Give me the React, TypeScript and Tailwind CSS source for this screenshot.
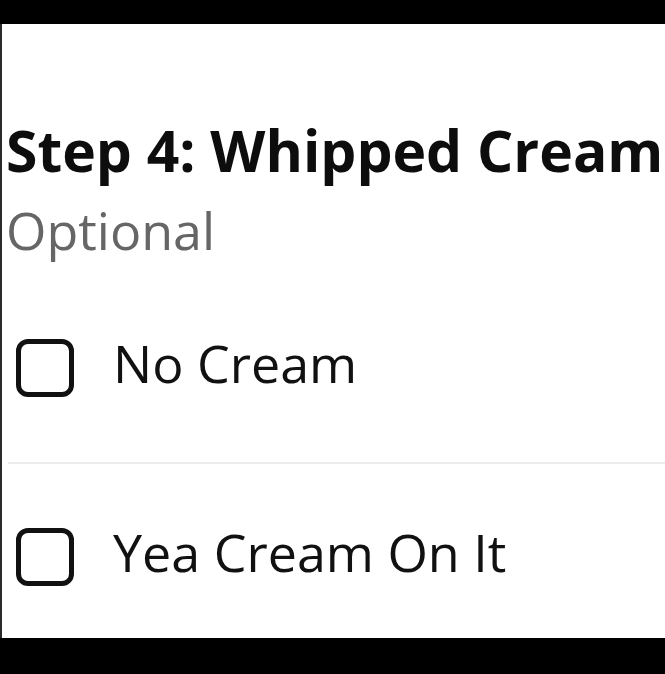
import { useState } from "react";

const options = ["No Cream", "Yea Cream On It"];

function Checkbox({ checked }: { checked: boolean }) {
    return (
        <span
            className={`block w-[58px] h-[58px] shrink-0 rounded-[12px] border-[5px] border-[#111] ${checked ? "bg-[#111]" : "bg-white"}`}
        />
    );
}

export default function App() {
    const [selected, setSelected] = useState<string[]>([]);

    const toggle = (name: string) => {
        setSelected((prev) => (prev.includes(name) ? prev.filter((n) => n !== name) : [...prev, name]));
    };

    return (
        <div className="w-[665px] h-[674px] bg-black flex flex-col overflow-hidden [font-variant-ligatures:none]" style={{ fontFamily: "'Open Sans', Lato, sans-serif" }}>
            <div className="h-[24px] shrink-0" />
            <div className="h-[614px] shrink-0 bg-white border-l-2 border-[#2a2a2a] pl-[4px] flex flex-col">
                <h1 className="mt-[98px] text-[57px] leading-[57px] font-bold text-[#0d0d0d] whitespace-nowrap">
                    Step 4: Whipped Cream
                </h1>
                <p className="mt-[25px] text-[52px] leading-[52px] text-[#666]">Optional</p>

                <div className="mt-[83px] flex flex-col">
                    {options.map((name, i) => (
                        <div key={name} className="flex flex-col">
                            {i > 0 && <div className="mt-[65px] mb-[64px] ml-[2px] h-[2px] bg-[#ececec]" />}
                            <button
                                type="button"
                                onClick={() => toggle(name)}
                                className="flex items-start text-left ml-[10px]"
                            >
                                <Checkbox checked={selected.includes(name)} />
                                <span className="ml-[39px] -mt-[2px] text-[52px] leading-[52px] font-medium text-[#111] whitespace-nowrap">
                                    {name}
                                </span>
                            </button>
                        </div>
                    ))}
                </div>
            </div>
        </div>
    );
}
